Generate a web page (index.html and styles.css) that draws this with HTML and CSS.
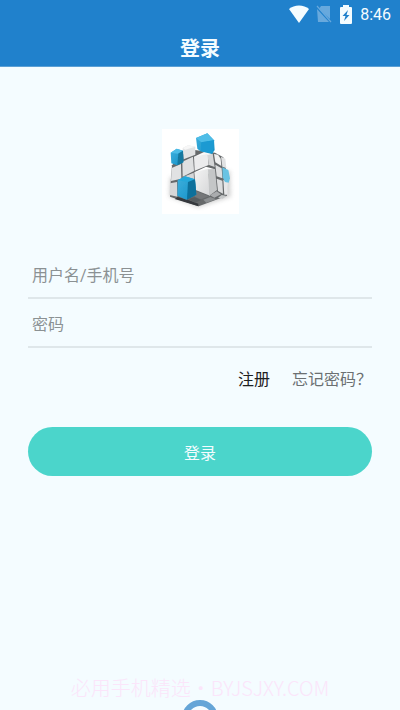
FILE: index.html
```html
<!DOCTYPE html>
<html lang="zh-CN">
<head>
<meta charset="utf-8">
<meta name="viewport" content="width=device-width, initial-scale=1">
<title>登录</title>
<link rel="stylesheet" href="styles.css">
</head>
<body>
<div class="screen">
  <header class="header">
    <div class="status">
      <svg class="wifi" viewBox="0 0 20 18" aria-hidden="true"><path fill="currentColor" d="M0 4C5-.8 15-.8 20 4L10 18Z"/></svg>
      <svg class="sim" viewBox="0 0 16 18" aria-hidden="true"><path fill="#68a9dd" d="M5 1h9v13L3 4zM1 4l12 13H2z"/><path stroke="#68a9dd" stroke-width="1.2" d="M1 1l14 16"/></svg>
      <svg class="battery" viewBox="0 0 12 19" aria-hidden="true"><path fill="currentColor" d="M3 0h6v2h2q1 0 1 1v15q0 1-1 1H1q-1 0-1-1V3q0-1 1-1h2z"/><path fill="#2081cc" d="M8 5L2.500 11h3L4 16l5.500-6h-3z"/></svg>
      <span class="time">8:46</span>
    </div>
    <h1 class="title">登录</h1>
  </header>
  <main class="main">
    <svg class="logo" viewBox="6 5 231 255" role="img" aria-label="魔方">
      <defs>
        <filter id="soft" x="-20%" y="-20%" width="140%" height="140%"><feGaussianBlur stdDeviation="6"/></filter>
        <filter id="edge"><feGaussianBlur stdDeviation="1.200"/></filter>
        <linearGradient id="front" x2="1" y2="1"><stop stop-color="#f4f4f4"/><stop offset="1" stop-color="#d6d7d8"/></linearGradient>
        <linearGradient id="blue" x2="1" y2="1"><stop stop-color="#3db0de"/><stop offset="1" stop-color="#1590c6"/></linearGradient>
      </defs>
      <path fill="#fff" d="M6 5h231v255H6z"/>
      <path fill="#999" opacity=".45" filter="url(#soft)" d="M30 150L28 208L115 240L212 208L210 130z"/>
      <g filter="url(#edge)">
        <path fill="#66696b" d="M36 114L66 80L104 68L165 76L190 90L203 150L201 205L116 237L30 208L32 165z"/>
        <path fill="#e2e3e4" d="M68 62L84 54L106 58L106 82L71 96z"/>
        <path fill="#f7f7f7" d="M68 62L84 54L106 58L76 67z"/>
        <path fill="#e1e2e3" d="M35 122L63 110L64 154L33 161z"/>
        <path fill="#dfe0e1" d="M67 103L99 88L102 131L68 148z"/>
        <path fill="#d6d7d8" d="M30 168L51 164L52 208L29 203z"/>
        <path fill="#d5d6d7" d="M71 148L101 136L103 166L84 150z"/>
        <path fill="#fafafa" d="M102 88L137 72L158 80L143 91z"/>
        <path fill="#ececed" d="M102 88L143 80L146 113L104 130z"/>
        <path fill="#d5d6d7" d="M142 83L158 79L164 119L147 113z"/>
        <path fill="#f1f1f1" d="M162 80L174 82L182 94L184 116L166 105z"/>
        <path fill="#e1e2e3" d="M183 88L196 94L199 122L187 118z"/>
        <path fill="#dedfe0" d="M166 112L185 123L187 153L170 147z"/>
        <path fill="#dcddde" d="M170 154L187 160L189 199L174 191z"/>
        <path fill="#e7e7e8" d="M190 157L204 164L203 202L193 202z"/>
        <path fill="#fdfdfd" d="M103 135L138 118L165 126L147 139z"/>
        <path fill="url(#front)" d="M103 135L145 124L150 205L107 188z"/>
        <path fill="#c4c6c7" d="M144 126L165 125L171 188L148 205z"/>
        <path fill="#747779" d="M107 191L147 207L123 216L104 208z"/>
        <path fill="#aaacae" d="M150 204L170 192L183 201L163 211z"/>
        <path fill="#8c8f91" d="M130 217L151 209L169 216L139 226z"/>
        <path fill="#c5c7c8" d="M174 211L185 203L200 206L188 214z"/>
        <path fill="#34393c" d="M53 209L85 218L115 229L115 237L44 215z"/>
        <path fill="#575b5e" d="M85 215L104 210L123 218L106 226z"/>
        <path fill="url(#blue)" d="M32 76L50 64L69 70L70 105L51 114L34 108z"/>
        <path fill="#4bbce7" d="M32 76L50 64L69 70L53 79z"/>
        <path fill="#12789f" d="M55 79L69 70L70 105L52 114z"/>
        <path fill="url(#blue)" d="M108 32L142 18L162 39L164 68L156 80L121 72L112 64z"/>
        <path fill="#4fbde7" d="M108 32L142 18L162 39L124 45z"/>
        <path fill="#1a9ad2" d="M124 45L162 39L158 78L123 71z"/>
        <path fill="url(#blue)" d="M53 159L75 147L105 156L109 202L79 217L52 205z"/>
        <path fill="#25a8da" d="M53 159L75 147L105 156L85 164z"/>
        <path fill="#096f9b" d="M84 164L105 156L109 202L81 217z"/>
        <path fill="#69c3e3" d="M187 120L205 128L210 153L206 166L195 164L188 150z"/>
      </g>
    </svg>
    <form class="form">
      <label class="field"><input class="input" type="text" placeholder="用户名/手机号" aria-label="用户名/手机号"></label>
      <label class="field"><input class="input" type="password" placeholder="密码" aria-label="密码"></label>
      <nav class="links">
        <a class="link register" href="#register">注册</a>
        <a class="link" href="#forgot">忘记密码？</a>
      </nav>
      <button class="submit" type="submit">登录</button>
    </form>
  </main>
  <footer class="footer">
    <p class="watermark">必用手机精选・BYJSJXY.COM</p>
    <div class="ring"></div>
  </footer>
</div>
</body>
</html>
```
FILE: styles.css
```css
* {
  box-sizing: border-box;
}

body {
  margin: 0;
  background: #f4fcff;
  font-family: Roboto, "Noto Sans CJK SC", sans-serif;
  font-size: 16px;
}

.screen {
  display: flex;
  flex-direction: column;
  height: 100vh;
  overflow: hidden;
}

.header {
  flex: none;
  border-bottom: 1px solid #5ba0d5;
  background: #2081cc;
  color: #f4fcff;
}

.status {
  display: flex;
  align-items: center;
  justify-content: flex-end;
  height: 28px;
  padding-right: 9px;
}

.wifi {
  width: 20px;
  height: 18px;
  margin-right: 7px;
}

.sim {
  width: 16px;
  height: 18px;
  margin-right: 8px;
}

.battery {
  width: 12px;
  height: 19px;
  margin-right: 8px;
}

.time {
  font-size: 16px;
}

.title {
  margin: 0;
  padding-top: 4px;
  font-size: 20px;
  font-weight: 700;
  line-height: 34px;
  text-align: center;
}

.main {
  flex: none;
  padding: 62px 28px 0;
}

.logo {
  display: block;
  width: 77px;
  height: 85px;
  margin: 0 auto 36px;
}

.field {
  display: block;
  height: 49px;
  border-bottom: 2px solid #dfe7ea;
}

.input {
  width: 100%;
  height: 100%;
  padding: 4px 4px 0;
  border: 0;
  outline: 0;
  background: transparent;
  color: #333;
  font: inherit;
}

.input::placeholder {
  color: #8b9193;
  opacity: 1;
}

.links {
  display: flex;
  justify-content: flex-end;
  gap: 22px;
  margin: 20px 0 35px;
  line-height: 24px;
}

.link {
  color: #6b7072;
  text-decoration: none;
}

.register {
  color: #1d2021;
}

.submit {
  display: block;
  width: 100%;
  height: 49px;
  padding: 0;
  border: 0;
  border-radius: 25px;
  background: #4bd5cb;
  color: #f4fcff;
  font: inherit;
}

.footer {
  flex: none;
  height: 34px;
  margin-top: auto;
}

.watermark {
  margin: 0;
  color: #fbe5fa;
  font-family: "Noto Sans CJK SC", sans-serif;
  font-size: 20px;
  font-weight: 300;
  line-height: 24px;
  text-align: center;
  white-space: nowrap;
}

.ring {
  width: 36px;
  height: 36px;
  margin: 0 auto;
  border: 6px solid #65a5d7;
  border-radius: 50%;
}
```
